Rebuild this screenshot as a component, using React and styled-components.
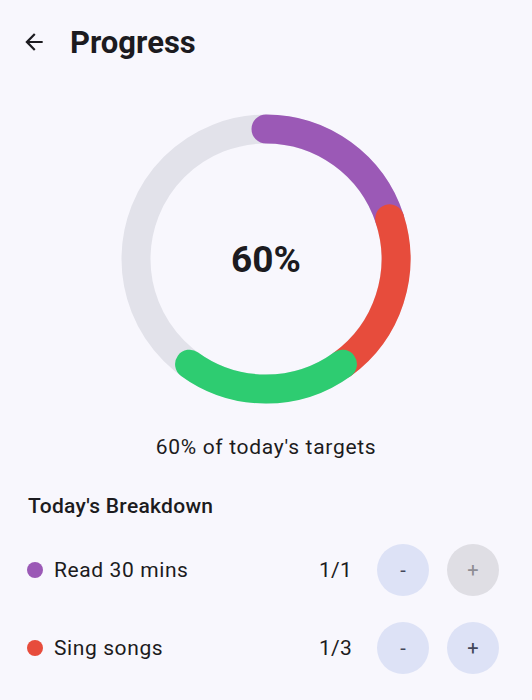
import React from 'react';
import styled, { createGlobalStyle } from 'styled-components';

const GlobalStyle = createGlobalStyle`
  html, body {
    margin: 0;
    padding: 0;
    background: #f8f7fd;
    font-family: Roboto, "Noto Sans", sans-serif;
    color: #1c1b20;
  }
`;

const tasks = [
  { name: 'Read 30 mins', color: '#9b59b6', done: 1, total: 1 },
  { name: 'Sing songs', color: '#e74c3c', done: 1, total: 3 },
];

const segments = [
  { color: '#9b59b6', from: 0, to: 72 },
  { color: '#e74c3c', from: 72, to: 144 },
  { color: '#2ecc71', from: 144, to: 216 },
];

const Page = styled.div`
  width: 532px;
  height: 700px;
  overflow: hidden;
  display: flex;
  flex-direction: column;
`;

const Header = styled.header`
  display: flex;
  align-items: center;
  height: 84px;
  padding-left: 21px;
  gap: 23px;
`;

const BackButton = styled.button`
  border: none;
  background: none;
  padding: 0;
  width: 26px;
  height: 26px;
  display: flex;
  align-items: center;
  justify-content: center;
  color: #1c1b20;
`;

const Title = styled.h1`
  margin: 0;
  font-size: 31px;
  font-weight: 700;
`;

const ChartWrap = styled.div`
  position: relative;
  width: 290px;
  height: 290px;
  margin: 30px auto 0;
`;

const Percent = styled.div`
  position: absolute;
  inset: 0;
  display: flex;
  align-items: center;
  justify-content: center;
  font-size: 37px;
  font-weight: 700;
`;

const Caption = styled.p`
  margin: 31px 0 0;
  text-align: center;
  font-size: 21px;
  letter-spacing: 0.7px;
`;

const SectionTitle = styled.h2`
  margin: 35px 0 0 28px;
  font-size: 21px;
  font-weight: 500;
  letter-spacing: 0.3px;
`;

const TaskList = styled.ul`
  list-style: none;
  margin: 26px 0 0;
  padding: 0 33px 0 27px;
  display: flex;
  flex-direction: column;
  gap: 26px;
`;

const TaskRow = styled.li`
  display: flex;
  align-items: center;
  height: 52px;
`;

const Dot = styled.span`
  width: 16px;
  height: 16px;
  border-radius: 50%;
  background: ${(p) => p.color};
  margin-right: 11px;
`;

const TaskName = styled.span`
  flex: 1;
  font-size: 21px;
  letter-spacing: 0.6px;
`;

const Count = styled.span`
  font-size: 21px;
  margin-right: 25px;
  letter-spacing: 0.2px;
`;

const StepButton = styled.button`
  width: 52px;
  height: 52px;
  border-radius: 50%;
  border: none;
  margin-left: ${(p) => (p.second ? '18px' : '0')};
  background: ${(p) => (p.disabled ? '#dfdee4' : '#dde2f6')};
  color: ${(p) => (p.disabled ? '#8f8e94' : '#43475a')};
  font-family: Roboto, sans-serif;
  font-size: 20px;
  padding: 0;
`;

const R = 130;
const C = 145;

const arcPath = (from, to) => {
  const pt = (deg) => {
    const a = (deg * Math.PI) / 180;
    return [C + R * Math.sin(a), C - R * Math.cos(a)];
  };
  const [x1, y1] = pt(from);
  const [x2, y2] = pt(to);
  const large = to - from > 180 ? 1 : 0;
  return `M ${x1} ${y1} A ${R} ${R} 0 ${large} 1 ${x2} ${y2}`;
};

const Ring = () => (
  <svg width="290" height="290" viewBox="0 0 290 290">
    <circle cx={C} cy={C} r={R} fill="none" stroke="#e2e2ea" strokeWidth="29" />
    {segments.map((s) => (
      <path
        key={s.color}
        d={arcPath(s.from, s.to)}
        fill="none"
        stroke={s.color}
        strokeWidth="29"
        strokeLinecap="round"
      />
    ))}
  </svg>
);

const App = () => {
  return (
    <Page>
      <GlobalStyle />
      <Header>
        <BackButton aria-label="back">
          <svg width="26" height="26" viewBox="0 0 24 24">
            <path d="M20 11H7.83l5.59-5.59L12 4l-8 8 8 8 1.41-1.41L7.83 13H20v-2z" fill="currentColor" />
          </svg>
        </BackButton>
        <Title>Progress</Title>
      </Header>
      <ChartWrap>
        <Ring />
        <Percent>60%</Percent>
      </ChartWrap>
      <Caption>60% of today's targets</Caption>
      <SectionTitle>Today's Breakdown</SectionTitle>
      <TaskList>
        {tasks.map((t) => (
          <TaskRow key={t.name}>
            <Dot color={t.color} />
            <TaskName>{t.name}</TaskName>
            <Count>{t.done}/{t.total}</Count>
            <StepButton>-</StepButton>
            <StepButton second disabled={t.done >= t.total}>+</StepButton>
          </TaskRow>
        ))}
      </TaskList>
    </Page>
  );
};

export default App;
